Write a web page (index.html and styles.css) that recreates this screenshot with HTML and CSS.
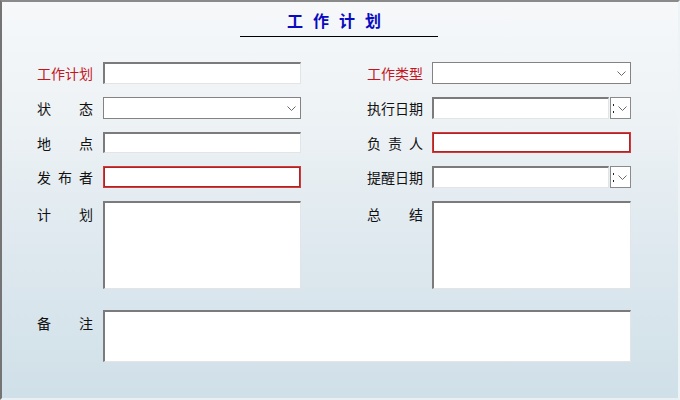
FILE: index.html
```html
<!DOCTYPE html>
<html lang="zh-CN">
<head>
<meta charset="utf-8">
<title>工作计划</title>
<link rel="stylesheet" href="styles.css">
</head>
<body>
<div class="window">
  <div class="title">工作计划</div>
  <div class="form">
    <div class="lbl req"><span class="j">工作计划</span></div>
    <div class="box text"></div>
    <div class="lbl r req"><span class="j">工作类型</span></div>
    <div class="box select"><svg class="chev" width="9" height="5" viewBox="0 0 9 5"><polyline points="0.5,0.5 4.5,4.5 8.5,0.5" fill="none" stroke="#6a6a6a" stroke-width="1"/></svg></div>

    <div class="lbl"><span class="j">状态</span></div>
    <div class="box select"><svg class="chev" width="9" height="5" viewBox="0 0 9 5"><polyline points="0.5,0.5 4.5,4.5 8.5,0.5" fill="none" stroke="#6a6a6a" stroke-width="1"/></svg></div>
    <div class="lbl r"><span class="j">执行日期</span></div>
    <div class="date">
      <div class="box text dt"></div>
      <div class="btn"><span class="dots"></span><svg width="9" height="5" viewBox="0 0 9 5"><polyline points="0.5,0.5 4.5,4.5 8.5,0.5" fill="none" stroke="#6a6a6a" stroke-width="1"/></svg></div>
    </div>

    <div class="lbl"><span class="j">地点</span></div>
    <div class="box text"></div>
    <div class="lbl r"><span class="j">负责人</span></div>
    <div class="box red"></div>

    <div class="lbl"><span class="j">发布者</span></div>
    <div class="box red"></div>
    <div class="lbl r"><span class="j">提醒日期</span></div>
    <div class="date">
      <div class="box text dt"></div>
      <div class="btn"><span class="dots"></span><svg width="9" height="5" viewBox="0 0 9 5"><polyline points="0.5,0.5 4.5,4.5 8.5,0.5" fill="none" stroke="#6a6a6a" stroke-width="1"/></svg></div>
    </div>

    <div class="lbl top"><span class="j">计划</span></div>
    <div class="box text area"></div>
    <div class="lbl r top"><span class="j">总结</span></div>
    <div class="box text area"></div>

    <div class="lbl top memo-lbl"><span class="j">备注</span></div>
    <div class="box text memo"></div>
  </div>
</div>
</body>
</html>
```

FILE: styles.css
```css
html, body {
  margin: 0;
  padding: 0;
}
body {
  width: 680px;
  height: 400px;
  overflow: hidden;
  font-family: "Noto Sans CJK SC", "Noto Sans", sans-serif;
}
.window {
  box-sizing: border-box;
  width: 680px;
  height: 400px;
  border-left: 2px solid #747474;
  border-top: 2px solid #8a8a8a;
  border-right: 2px solid #eef3f5;
  border-bottom: 2px solid #e9f0f3;
  background: linear-gradient(180deg, #f6f8fa 0%, #edf2f5 30%, #dfe9ef 60%, #d0e0e8 100%);
}
.title {
  box-sizing: border-box;
  width: 198px;
  height: 35px;
  margin-left: 238px;
  padding-top: 8px;
  line-height: 20px;
  font-size: 16px;
  font-weight: bold;
  letter-spacing: 10px;
  color: #0a0ac0;
  text-align: center;
  border-bottom: 1px solid #000;
}
.form {
  margin-top: 25px;
  padding-left: 35px;
  display: grid;
  grid-template-columns: 66px 198px 131px 199px;
  grid-template-rows: 22px 22px 21px 22px 88px 60px;
  row-gap: 13px;
}
.lbl {
  font-size: 14px;
  line-height: 22px;
  color: #111;
  white-space: nowrap;
}
.lbl.r {
  padding-left: 66px;
}
.lbl.req {
  color: #c4161c;
}
.lbl .j {
  display: block;
  width: 56px;
  text-align: justify;
  text-align-last: justify;
}
.lbl.top {
  padding-top: 2px;
}
.box {
  box-sizing: border-box;
  background: #fff;
}
.text {
  border-top: 2px solid #7b7b7b;
  border-left: 2px solid #7b7b7b;
  border-right: 1px solid #e2e4e6;
  border-bottom: 1px solid #e2e4e6;
}
.select {
  border: 1px solid #838383;
  display: flex;
  align-items: center;
  justify-content: flex-end;
  padding-right: 4px;
}
.red {
  border: 1px solid #d03a3a;
  box-shadow: inset 0 0 0 1px #b02424;
}
.date {
  display: flex;
  gap: 1px;
}
.dt {
  width: 177px;
}
.btn {
  box-sizing: border-box;
  width: 21px;
  border: 1px solid #8a8a8a;
  background: #fff;
  display: flex;
  align-items: center;
  padding-left: 2px;
  gap: 4px;
}
.dots {
  width: 1px;
  height: 9px;
  background: linear-gradient(180deg, #222 0 2px, transparent 2px 7px, #222 7px 9px);
}
.memo-lbl {
  margin-top: 8px;
}
.memo {
  grid-column: 2 / 5;
  margin-top: 8px;
}
```
